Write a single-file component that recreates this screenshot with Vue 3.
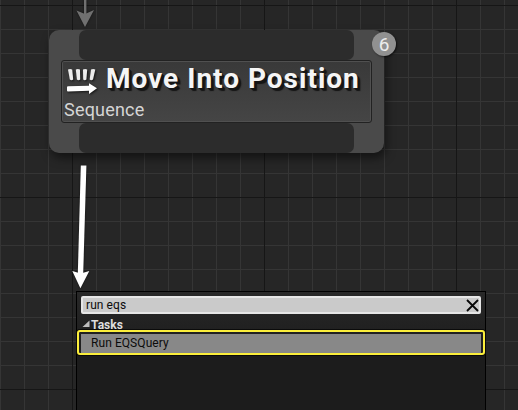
<script setup>
import { ref } from 'vue'

const query = ref('run eqs')
const results = ['Run EQSQuery']
</script>

<template>
  <main class="graph">
    <svg class="wires" width="518" height="410" viewBox="0 0 518 410">
      <g fill="#707070">
        <path d="M84 0h2.400v14H84z" />
        <path d="M76.500 10.500l8.500 3.500 9-4-9 17z" />
      </g>
      <path d="M80.800 165.500h5.600L83.200 274h-5.400z" fill="#fff" />
      <path d="M72.300 271l8.400 2.600 8.600-2.600-8.900 17.300z" fill="#fff" />
    </svg>

    <section class="node">
      <div class="pin"></div>
      <div class="panel">
        <div class="heading">
          <svg class="icon" width="32" height="28" viewBox="0 0 32 28">
            <g fill="#ececec">
              <path d="M2 2.500q2.200-1 4.200 0l1 10q-1.600 1.400-3.400 0z" />
              <path d="M9.800 2.500q2-1 4.200 0l.2 10q-1.600 1.400-3.300 0z" />
              <path d="M17 2.500q2.200-1 4.200 0l-.8 10q-1.600 1.400-3.200 0z" />
              <path d="M25 2.500q2.200-1 4.300 0l-2.300 10q-1.700 1.400-3.300 0z" />
            </g>
            <path d="M2 19.200q-1 0-1 1v3.200q0 1 1 1l21-.7v3.300l8-5.700-8-5v2.400z" fill="#fff" />
          </svg>
          <h1>Move Into Position</h1>
        </div>
        <p>Sequence</p>
      </div>
      <div class="pin"></div>
      <span class="order">6</span>
    </section>

    <section class="menu">
      <div class="search">
        <span>{{ query }}</span>
        <svg width="13" height="13" viewBox="0 0 13 13">
          <path d="M1 1l11 11M12 1l-11 11" stroke="#080808" stroke-width="1.800" />
        </svg>
      </div>
      <div class="category">
        <svg width="8" height="8" viewBox="0 0 8 8"><path d="M7.500 .500v6.500H.500z" fill="#bdbdbd" /></svg>
        <span>Tasks</span>
      </div>
      <div v-for="item in results" :key="item" class="result"><span>{{ item }}</span></div>
    </section>
  </main>
</template>

<style>
body {
  margin: 0;
  background: #262626;
}
</style>

<style scoped>
.graph {
  position: relative;
  width: 518px;
  height: 410px;
  overflow: hidden;
  font-family: Roboto, sans-serif;
  background-color: #262626;
  background-image:
    linear-gradient(90deg, #161616 1px, transparent 1px),
    linear-gradient(#161616 1px, transparent 1px),
    linear-gradient(90deg, #353535 1px, transparent 1px),
    linear-gradient(#353535 1px, transparent 1px);
  background-size: 192px 192px, 192px 192px, 24px 24px, 24px 24px;
  background-position: 72px 0, 0 5px, 0 0, 0 5px;
}

.wires {
  position: absolute;
  inset: 0;
  filter: drop-shadow(0 0 1px rgba(0, 0, 0, 0.5));
}

.node {
  position: absolute;
  left: 49px;
  top: 30px;
  width: 335px;
  height: 123px;
  display: flex;
  flex-direction: column;
  border-radius: 10px;
  background: #4a4a4a;
  box-shadow: 2px 5px 10px rgba(0, 0, 0, 0.5);
}

.pin {
  height: 30px;
  margin: 0 30px;
  border-radius: 7px;
  background: #2c2c2c;
}

.panel {
  box-sizing: border-box;
  height: 63px;
  margin: 0 12px;
  border: 1px solid #222;
  border-radius: 3px;
  background: linear-gradient(#393939, #454545);
  box-shadow: inset 0 0 0 1px #505050;
}

.heading {
  display: flex;
  align-items: center;
  height: 36px;
  padding-left: 4px;
}

.icon {
  margin-top: 4px;
  filter: drop-shadow(1px 1px 1px rgba(0, 0, 0, 0.7));
}

h1 {
  margin: 0 0 0 8px;
  font-size: 28px;
  line-height: 34px;
  font-weight: 700;
  letter-spacing: 1px;
  white-space: nowrap;
  color: #f5f5f5;
  text-shadow: 1px 1px 0 #151515, 2px 2px 0 #151515, 3px 3px 1px #151515;
}

p {
  margin: 0;
  padding: 1px 0 0 2px;
  font-size: 18px;
  line-height: 24px;
  letter-spacing: 0.2px;
  color: #d5d5d5;
}

.order {
  position: absolute;
  left: 323px;
  top: 2px;
  width: 24px;
  height: 24px;
  border-radius: 50%;
  background: #919191;
  color: #ececec;
  font-size: 19px;
  line-height: 25px;
  text-align: center;
  box-shadow: 1px 1px 2px rgba(0, 0, 0, 0.6);
}

.menu {
  position: absolute;
  left: 76px;
  top: 291px;
  box-sizing: border-box;
  width: 410px;
  height: 125px;
  padding: 4px 0 0;
  border: 1px solid #000;
  background: linear-gradient(#282828, #1c1c1c 60px);
  font-size: 12px;
  letter-spacing: 0.07px;
  color: #0c0c0c;
}

.search {
  box-sizing: border-box;
  display: flex;
  align-items: center;
  justify-content: space-between;
  height: 18px;
  margin: 0 4px;
  padding: 0 0 0 3px;
  border: 2px solid #e6e6e6;
  border-radius: 2px;
  background: #cacaca;
}

.category {
  display: flex;
  align-items: center;
  height: 16px;
  padding: 0 0 0 5px;
  font-weight: 700;
  color: #dedede;
}

.category svg {
  margin-top: 3px;
}

.category span {
  margin: 5px 0 0 1px;
}

.result {
  position: relative;
  box-sizing: border-box;
  height: 25px;
  border: 2px solid #fbee3b;
  border-radius: 3px;
  padding: 2px;
  background: #202020;
  box-shadow: 0 0 0 1px #0b0b0b;
}

.result span {
  display: block;
  height: 19px;
  padding-left: 10px;
  line-height: 19px;
  background: #888;
}
</style>
